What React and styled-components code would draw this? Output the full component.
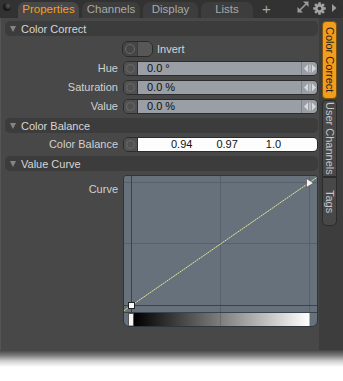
import React from "react";
import styled, { createGlobalStyle } from "styled-components";

const Global = createGlobalStyle`
  html, body { margin: 0; padding: 0; background: #fff; }
  body { font-family: "Liberation Sans", Arial, sans-serif; font-size: 11px; }
  * { box-sizing: border-box; }
`;

const Page = styled.div`
  width: 343px;
  height: 381px;
  background: #fff;
  overflow: hidden;
`;

const Panel = styled.div`
  height: 350px;
  background: #484848;
  display: flex;
  flex-direction: column;
  box-shadow: inset 1px 0 0 #555;
`;

const Fade = styled.div`
  height: 17px;
  background: linear-gradient(to bottom, #444 0%, #777 30%, #cfcfcf 65%, #fff 100%);
`;

const TabBar = styled.div`
  height: 18px;
  flex: none;
  background: #323232;
  display: flex;
  align-items: flex-end;
  padding-left: 3px;
`;

const Dot = styled.div`
  width: 8px;
  height: 8px;
  border-radius: 50%;
  background: radial-gradient(circle at 65% 35%, #5a5a5a 0, #151515 60%);
  align-self: flex-start;
  margin-top: 3px;
  margin-right: 7px;
`;

const Tab = styled.div`
  width: ${(p) => p.$w}px;
  height: 16px;
  margin-right: 3px;
  border-radius: 7px 7px 0 0;
  background: ${(p) => (p.$active ? "#484848" : "#3d3d3d")};
  color: ${(p) => (p.$active ? "#f5a01a" : "#a9a9a9")};
  font-size: 11.5px;
  display: flex;
  align-items: center;
  justify-content: center;
  padding-bottom: 2px;
`;

const AddTab = styled.div`
  color: #a8a8a8;
  font-size: 15px;
  line-height: 15px;
  align-self: flex-start;
  margin-top: 1px;
  margin-left: 6px;
`;

const BarIcons = styled.div`
  margin-left: auto;
  align-self: flex-start;
  display: flex;
  align-items: center;
  padding-right: 6px;
  height: 14px;
`;

const IconBox = styled.div`
  display: flex;
  margin-left: ${(p) => p.$ml || 0}px;
  margin-top: ${(p) => p.$mt || 0}px;
`;

const Body = styled.div`
  flex: 1;
  display: flex;
`;

const Main = styled.div`
  width: 319px;
  padding: 3px 0 0 5px;
  display: flex;
  flex-direction: column;
  gap: 4px;
`;

const SideColumn = styled.div`
  flex: 1;
  background: #3d3d3d;
  padding: 3px 0 0 3px;
  display: flex;
  flex-direction: column;
`;

const SideTab = styled.div`
  width: 15px;
  height: ${(p) => p.$h}px;
  margin-bottom: ${(p) => p.$mb || 0}px;
  writing-mode: vertical-rl;
  display: flex;
  align-items: center;
  justify-content: center;
  font-size: 11px;
  border-radius: ${(p) => p.$r};
  background: ${(p) => (p.$active ? "#f39d1c" : "#484848")};
  color: ${(p) => (p.$active ? "#1c1c1c" : "#c6c6c6")};
  border: 1px solid ${(p) => (p.$active ? "#7a5212" : "#2b2b2b")};
`;

const SectionHeader = styled.div`
  width: 313px;
  height: 15px;
  background: #3c3c3c;
  border-radius: 5px;
  display: flex;
  align-items: center;
  padding-left: 5px;
  gap: 5px;
  color: #d6d6d6;
`;

const Caret = styled.span`
  width: 0;
  height: 0;
  border-left: 3px solid transparent;
  border-right: 3px solid transparent;
  border-top: 6px solid #858585;
`;

const Row = styled.div`
  display: flex;
  align-items: ${(p) => p.$align || "center"};
  gap: ${(p) => p.$gap || 5}px;
  height: ${(p) => p.$h || 15}px;
`;

const Label = styled.div`
  width: 113px;
  text-align: right;
  color: #d0d0d0;
  line-height: 13px;
  padding-top: ${(p) => p.$pt || 0}px;
`;

const Toggle = styled.div`
  width: 31px;
  height: 16px;
  border: 1px solid #2a2a2a;
  border-radius: 6px;
  display: flex;
  overflow: hidden;
`;

const ToggleHalf = styled.div`
  flex: 1;
  display: flex;
  align-items: center;
  justify-content: center;
  background: ${(p) => (p.$on ? "#464646" : "#575757")};
  border-left: ${(p) => (p.$on ? "none" : "1px solid #3a3a3a")};
`;

const Ring = styled.span`
  width: ${(p) => p.$s || 10}px;
  height: ${(p) => p.$s || 10}px;
  border-radius: 50%;
  border: 1px solid #6a6a6a;
`;

const ToggleText = styled.span`
  color: #d4d4d4;
`;

const Field = styled.div`
  width: 195px;
  height: 15px;
  border: 1px solid #2c2c2c;
  border-radius: 5px;
  display: flex;
  overflow: hidden;
`;

const Knob = styled.div`
  width: 14px;
  flex: none;
  background: #515151;
  border-right: 1px solid #2e2e2e;
  display: flex;
  align-items: center;
  justify-content: center;
`;

const Value = styled.div`
  flex: 1;
  background: ${(p) => (p.$white ? "#fdfdfd" : "#999fa5")};
  color: #111;
  line-height: 13px;
  padding-left: ${(p) => (p.$white ? 33 : 9)}px;
  display: flex;
`;

const Num = styled.span`
  margin-left: ${(p) => p.$ml || 0}px;
`;

const Spinner = styled.div`
  width: 16px;
  flex: none;
  background: #999fa5;
  border-left: 1px solid #7d8389;
  display: flex;
  align-items: center;
  justify-content: center;
`;

const CurveBox = styled.div`
  width: 195px;
  height: 152px;
  background: #66717c;
  border: 1px solid #2e353b;
  border-radius: 3px 3px 6px 6px;
  overflow: hidden;
  display: flex;
`;

const SpinIcon = () => (
  <svg width="12" height="9" viewBox="0 0 12 9">
    <polygon points="4,0.5 4,8.5 0,4.5" fill="#d6dade" />
    <rect x="5.5" y="0.5" width="1" height="8" fill="#d6dade" />
    <polygon points="8,0.5 8,8.5 12,4.5" fill="#d6dade" />
  </svg>
);

const NumField = ({ children }) => (
  <Field>
    <Knob>
      <Ring $s={9} />
    </Knob>
    <Value>{children}</Value>
    <Spinner>
      <SpinIcon />
    </Spinner>
  </Field>
);

const Gear = () => (
  <svg width="13" height="13" viewBox="0 0 13 13">
    {[0, 45, 90, 135].map((a) => (
      <rect
        key={a}
        x="5.2"
        y="0.3"
        width="2.6"
        height="12.4"
        fill="#a3a3a3"
        transform={`rotate(${a} 6.5 6.5)`}
      />
    ))}
    <circle cx="6.5" cy="6.5" r="4.4" fill="#a3a3a3" />
    <circle cx="6.5" cy="6.5" r="1.8" fill="#323232" />
  </svg>
);

const Expand = () => (
  <svg width="12" height="12" viewBox="0 0 12 12">
    <path d="M3 9 L9 3" stroke="#9a9a9a" strokeWidth="1.6" />
    <polygon points="0.5,11.5 0.5,6 6,11.5" fill="#9a9a9a" />
    <polygon points="11.5,0.5 6,0.5 11.5,6" fill="#9a9a9a" />
  </svg>
);

const Play = () => (
  <svg width="5" height="8" viewBox="0 0 5 8">
    <polygon points="0,0 4.5,4 0,8" fill="#9a9a9a" />
  </svg>
);

const CurveChart = () => {
  const y = (x) => 129.5 - 0.691 * (x - 7.5);
  return (
    <svg width="193" height="150" viewBox="0 0 193 150">
      <defs>
        <linearGradient id="ramp" x1="0" x2="1" y1="0" y2="0">
          <stop offset="0" stopColor="#000" />
          <stop offset="1" stopColor="#fff" />
        </linearGradient>
      </defs>
      <g stroke="#56616b" strokeWidth="1">
        <line x1="0" y1="6.5" x2="193" y2="6.5" />
        <line x1="0" y1="67.5" x2="193" y2="67.5" />
        <line x1="96.5" y1="0" x2="96.5" y2="150" />
        <line x1="185.5" y1="0" x2="185.5" y2="136" />
      </g>
      <g stroke="#3a434c" strokeWidth="1">
        <line x1="7.5" y1="0" x2="7.5" y2="150" />
        <line x1="0" y1="129.5" x2="193" y2="129.5" />
        <line x1="0" y1="136.5" x2="193" y2="136.5" />
      </g>
      <rect x="10" y="137" width="175.5" height="13" fill="url(#ramp)" />
      <line x1="96.5" y1="137" x2="96.5" y2="150" stroke="#6a6a6a" strokeWidth="1" />
      <rect x="4.5" y="137.5" width="5" height="12.5" fill="#f4f4f4" stroke="#555" strokeWidth="1" />
      <line
        x1="0"
        y1={y(0)}
        x2="193"
        y2={y(193)}
        stroke="#e2e795"
        strokeWidth="1"
        strokeDasharray="2 0.6"
      />
      <rect x="4.5" y="126.5" width="6" height="6" fill="#fafafa" stroke="#222" strokeWidth="1" />
      <polygon points="182.5,2.5 189.5,7 182.5,11.5" fill="#f2f2f2" stroke="#444" strokeWidth="0.6" />
    </svg>
  );
};

export default function App() {
  return (
    <Page>
      <Global />
      <Panel>
        <TabBar>
          <Dot />
          <Tab $w={61} $active>
            Properties
          </Tab>
          <Tab $w={58}>Channels</Tab>
          <Tab $w={55}>Display</Tab>
          <Tab $w={52}>Lists</Tab>
          <AddTab>+</AddTab>
          <BarIcons>
            <IconBox>
              <Expand />
            </IconBox>
            <IconBox $ml={4} $mt={2}>
              <Gear />
            </IconBox>
            <IconBox $ml={6} $mt={1}>
              <Play />
            </IconBox>
          </BarIcons>
        </TabBar>
        <Body>
          <Main>
            <SectionHeader>
              <Caret />
              Color Correct
            </SectionHeader>
            <Row $h={17} $gap={4}>
              <Label />
              <Row $gap={4} $h={17}>
                <Toggle>
                  <ToggleHalf $on>
                    <Ring $s={10} />
                  </ToggleHalf>
                  <ToggleHalf />
                </Toggle>
                <ToggleText>Invert</ToggleText>
              </Row>
            </Row>
            <Row>
              <Label>Hue</Label>
              <NumField>0.0 °</NumField>
            </Row>
            <Row>
              <Label>Saturation</Label>
              <NumField>0.0 %</NumField>
            </Row>
            <Row>
              <Label>Value</Label>
              <NumField>0.0 %</NumField>
            </Row>
            <SectionHeader>
              <Caret />
              Color Balance
            </SectionHeader>
            <Row>
              <Label>Color Balance</Label>
              <Field>
                <Knob>
                  <Ring $s={9} />
                </Knob>
                <Value $white>
                  <Num>0.94</Num>
                  <Num $ml={24}>0.97</Num>
                  <Num $ml={28}>1.0</Num>
                </Value>
              </Field>
            </Row>
            <SectionHeader>
              <Caret />
              Value Curve
            </SectionHeader>
            <Row $h={152} $align="flex-start">
              <Label $pt={8}>Curve</Label>
              <CurveBox>
                <CurveChart />
              </CurveBox>
            </Row>
          </Main>
          <SideColumn>
            <SideTab $h={78} $mb={1} $active $r="4px">
              Color Correct
            </SideTab>
            <SideTab $h={77} $r="4px 4px 0 0">
              User Channels
            </SideTab>
            <SideTab $h={49} $r="0 0 5px 5px">
              Tags
            </SideTab>
          </SideColumn>
        </Body>
      </Panel>
      <Fade />
    </Page>
  );
}
